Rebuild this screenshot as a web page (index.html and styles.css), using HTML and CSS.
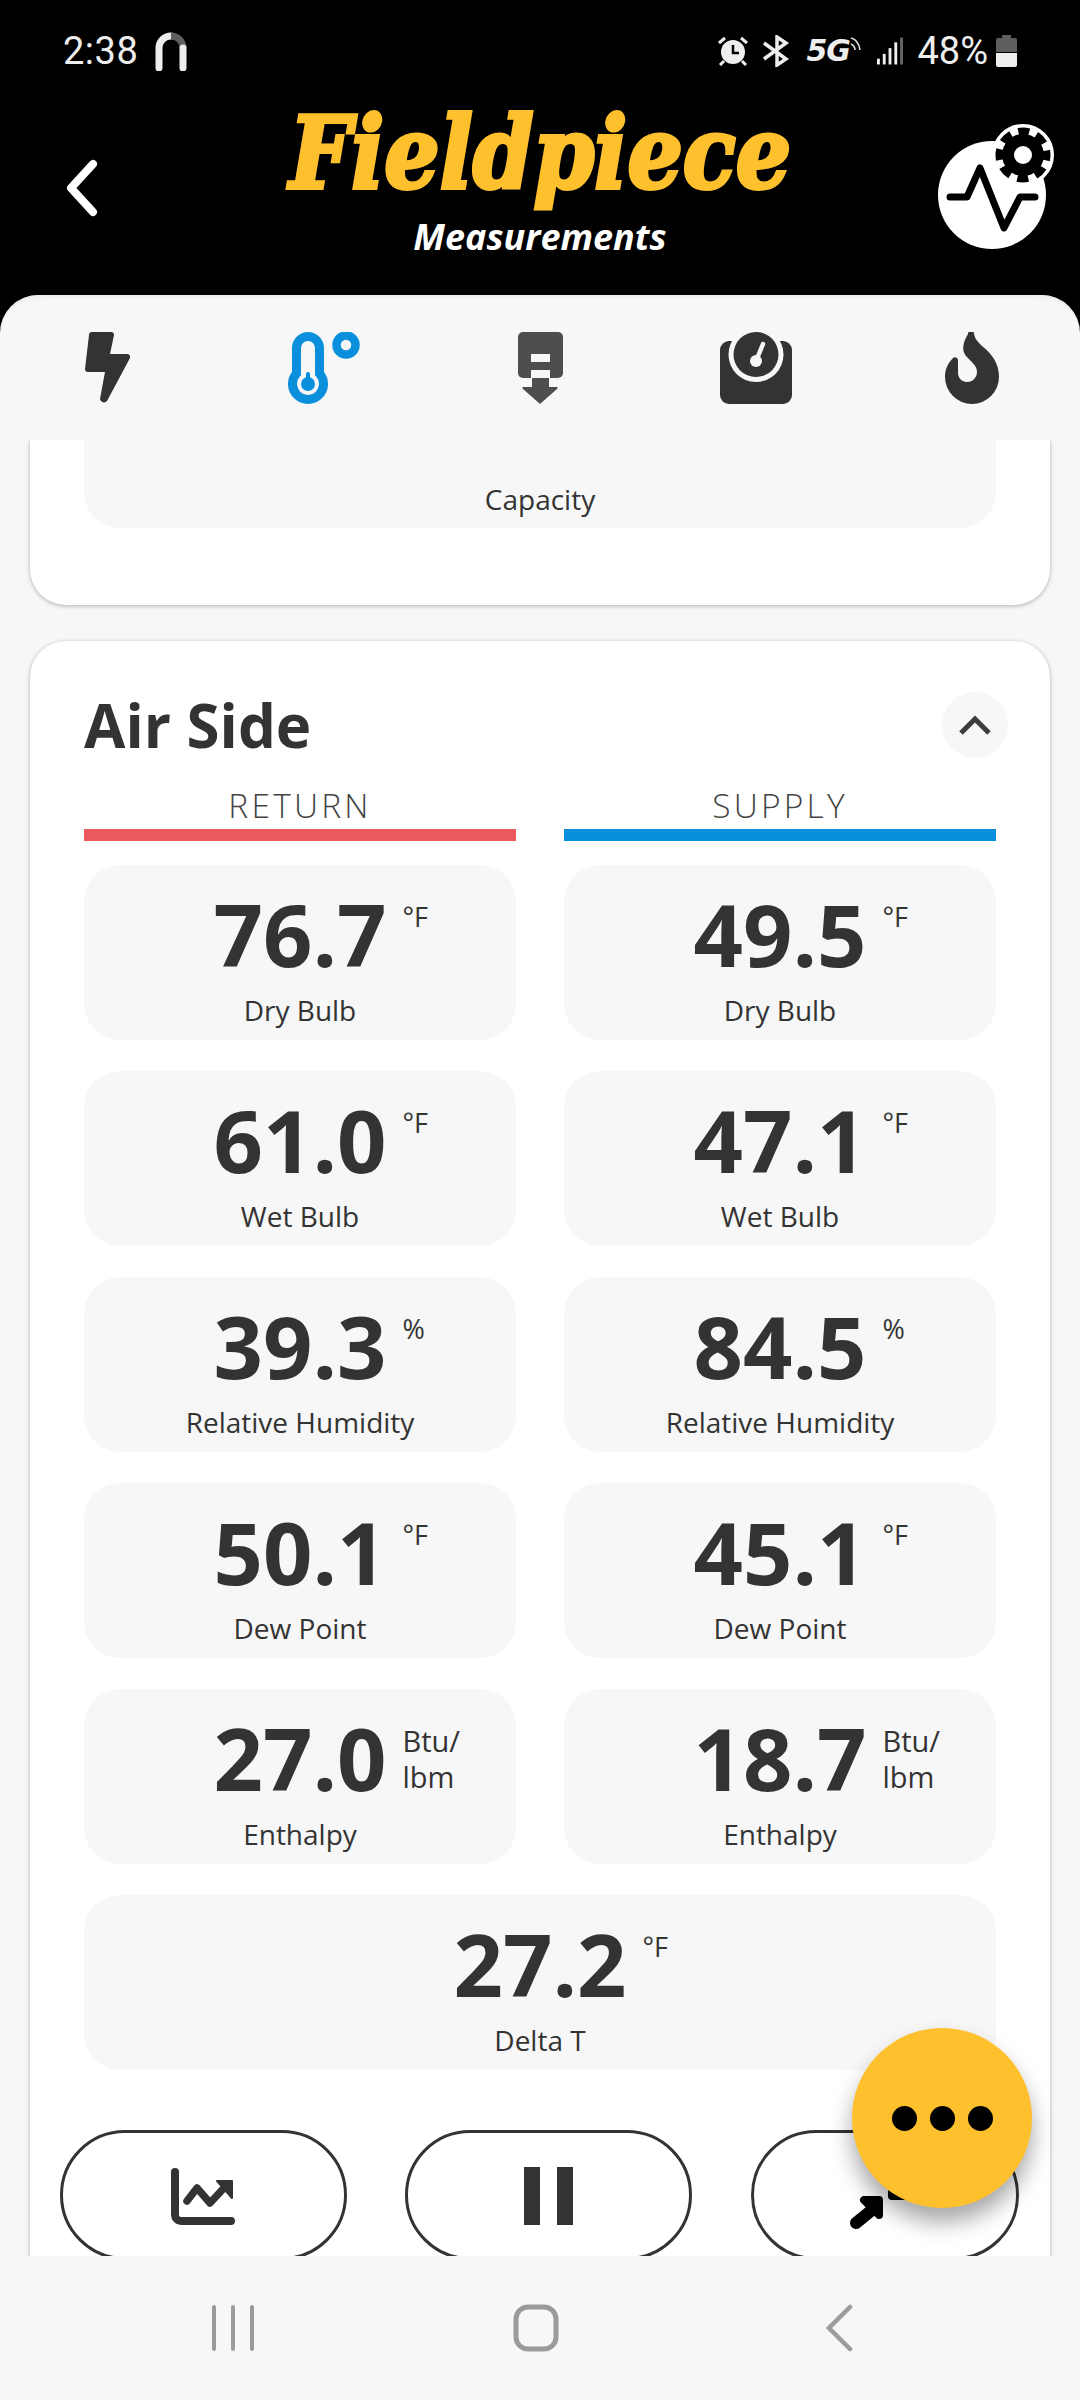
FILE: index.html
```html
<!DOCTYPE html>
<html lang="en">
<head>
<meta charset="utf-8">
<title>Fieldpiece Measurements</title>
<link rel="stylesheet" href="styles.css">
</head>
<body>
<div class="app">
  <header class="top">
    <div class="status">
      <div class="status-left">
        <span class="clock">2:38</span>
        <svg class="s-arch" viewBox="0 0 32 40"><path d="M4 37V17a12 12 0 0 1 12-12" fill="none" stroke="#eee" stroke-width="7" stroke-linecap="round"/><path d="M16 5a12 12 0 0 1 12 12" fill="none" stroke="#5e5e5e" stroke-width="7"/><path d="M28 17V37" fill="none" stroke="#eee" stroke-width="7" stroke-linecap="round"/></svg>
      </div>
      <div class="status-right">
        <svg class="s-alarm" viewBox="0 0 30 30"><circle cx="15" cy="16" r="12" fill="#eee"/><path d="M15 9v8h6" fill="none" stroke="#000" stroke-width="2.500"/><path d="M1 7l6-5M29 7l-6-5M6 25l-4 4M24 25l4 4" stroke="#eee" stroke-width="3" fill="none"/></svg>
        <svg class="s-bt" viewBox="0 0 28 32"><path d="M2 8l22 16-9 6V2l9 6L2 24" fill="none" stroke="#eee" stroke-width="3.500"/></svg>
        <span class="s-5g">5G</span>
        <svg class="s-wave" viewBox="0 0 12 16"><path d="M1 2c4 1 8 5 9 12M1 8c2 1 4 3 4 6" fill="none" stroke="#ddd" stroke-width="1.600"/></svg>
        <svg class="s-signal" viewBox="0 0 27 28"><rect x="0" y="22" width="3" height="6" fill="#eee"/><rect x="6" y="17" width="3" height="11" fill="#eee"/><rect x="12" y="11" width="3" height="17" fill="#eee"/><rect x="18" y="5" width="3" height="23" fill="#eee"/><rect x="24" y="0" width="3" height="28" fill="#666"/></svg>
        <span class="battery-pct">48%</span>
        <svg class="s-batt" viewBox="0 0 21 32"><path d="M6 0h9v3h4a2 2 0 0 1 2 2v12H0V5a2 2 0 0 1 2-2h4z" fill="#5e5e5e"/><path d="M0 18h21v12a2 2 0 0 1-2 2H2a2 2 0 0 1-2-2z" fill="#eee"/></svg>
      </div>
    </div>
    <div class="brand-row">
      <svg class="back" viewBox="0 0 36 60"><path d="M29 6L7 30l22 24" fill="none" stroke="#fff" stroke-width="8" stroke-linecap="round" stroke-linejoin="round"/></svg>
      <div class="brand">
        <div class="logo">Fieldpiece</div>
        <div class="subtitle">Measurements</div>
      </div>
      <svg class="settings" viewBox="0 0 120 130">
        <circle cx="54" cy="75" r="54" fill="#fff"/>
        <path d="M12 77H29L42 48L66 108L82 77H97" fill="none" stroke="#000" stroke-width="7" stroke-linecap="round" stroke-linejoin="round"/>
        <circle cx="85" cy="35" r="27" fill="#fff" stroke="#fff" stroke-width="8"/>
        <circle cx="85" cy="35" r="21" fill="#000"/>
        <circle cx="85" cy="35" r="22" fill="none" stroke="#000" stroke-width="11" stroke-dasharray="10.280 7" stroke-dashoffset="5.140"/>
        <circle cx="85" cy="35" r="9" fill="#fff"/>
      </svg>
    </div>
  </header>

  <div class="panel">
    <nav class="tabs">
      <svg class="tab-ico t-bolt" viewBox="0 0 45 72"><path d="M7 0H26a3 3 0 0 1 3 3L25 22H42a3 3 0 0 1 3 4L22 69a4 4 0 0 1-7-2L20 40H3a3 3 0 0 1-3-3L4 3a3 3 0 0 1 3-3Z" fill="#333"/></svg>
      <svg class="tab-ico t-therm" viewBox="0 0 72 72"><path d="M8.500 41.600V16a11.500 11.500 0 0 1 23 0V41.600a15.500 15.500 0 1 1-23 0Z" fill="none" stroke="#0a8fdc" stroke-width="9"/><circle cx="20" cy="52" r="7" fill="#0a8fdc"/><rect x="18" y="40" width="4" height="10" rx="2" fill="#0a8fdc"/><circle cx="58" cy="13" r="9.500" fill="none" stroke="#0a8fdc" stroke-width="8.500"/></svg>
      <svg class="tab-ico t-probe" viewBox="0 0 45 72"><rect width="45" height="46" rx="5" fill="#4d4e50"/><rect x="13" y="22" width="19" height="8" fill="#f7f7f7"/><rect x="13" y="38" width="19" height="8" fill="#f7f7f7"/><path d="M14 46H31V55H38a1 1 0 0 1 1 2L22 72L5 57a1 1 0 0 1 1-2H14Z" fill="#4d4e50"/></svg>
      <svg class="tab-ico t-scale" viewBox="0 0 72 72"><rect y="9" width="72" height="63" rx="9" fill="#333"/><circle cx="36" cy="22.500" r="27.500" fill="#f7f7f7"/><circle cx="36" cy="22.500" r="22.500" fill="#333"/><circle cx="36" cy="29" r="6" fill="#f7f7f7"/><path d="M36 29L43 12" stroke="#f7f7f7" stroke-width="4.500" stroke-linecap="round"/></svg>
      <svg class="tab-ico t-flame" viewBox="0 0 54 72"><path d="M23 2a3 3 0 0 1 6 0c1 5 4 8 8 12C47 22 54 31 54 45A27 27 0 0 1 0 45C0 37 3 31 8 26a3 3 0 0 1 5 2V41C13 46 17 50 22 50C28 50 32 45 32 40C32 33 26 30 21 24C17 19 17 12 23 2Z" fill="#333"/></svg>
    </nav>

    <main class="scroll">
      <section class="card card-cut">
        <div class="tile tile-cut"><div class="tile-label">Capacity</div></div>
      </section>

      <section class="card card-air">
        <div class="card-head">
          <h2 class="card-title">Air Side</h2>
          <div class="collapse"><svg viewBox="0 0 34 20"><path d="M3 18L17 4l14 14" fill="none" stroke="#3c3c3c" stroke-width="5"/></svg></div>
        </div>
        <div class="grid">
          <div class="col-head"><span class="col-name">RETURN</span><span class="bar bar-red"></span></div>
          <div class="col-head"><span class="col-name">SUPPLY</span><span class="bar bar-blue"></span></div>

          <div class="tile"><div class="reading"><span class="value">76.7</span><span class="unit">°F</span></div><div class="tile-label">Dry Bulb</div></div>
          <div class="tile"><div class="reading"><span class="value">49.5</span><span class="unit">°F</span></div><div class="tile-label">Dry Bulb</div></div>
          <div class="tile"><div class="reading"><span class="value">61.0</span><span class="unit">°F</span></div><div class="tile-label">Wet Bulb</div></div>
          <div class="tile"><div class="reading"><span class="value">47.1</span><span class="unit">°F</span></div><div class="tile-label">Wet Bulb</div></div>
          <div class="tile"><div class="reading"><span class="value">39.3</span><span class="unit">%</span></div><div class="tile-label">Relative Humidity</div></div>
          <div class="tile"><div class="reading"><span class="value">84.5</span><span class="unit">%</span></div><div class="tile-label">Relative Humidity</div></div>
          <div class="tile"><div class="reading"><span class="value">50.1</span><span class="unit">°F</span></div><div class="tile-label">Dew Point</div></div>
          <div class="tile"><div class="reading"><span class="value">45.1</span><span class="unit">°F</span></div><div class="tile-label">Dew Point</div></div>
          <div class="tile"><div class="reading"><span class="value">27.0</span><span class="unit unit-wide">Btu/<br>lbm</span></div><div class="tile-label">Enthalpy</div></div>
          <div class="tile"><div class="reading"><span class="value">18.7</span><span class="unit unit-wide">Btu/<br>lbm</span></div><div class="tile-label">Enthalpy</div></div>
          <div class="tile tile-full"><div class="reading"><span class="value">27.2</span><span class="unit">°F</span></div><div class="tile-label">Delta T</div></div>
        </div>
        <div class="actions">
          <button class="pill pill-a"><svg class="i-chart" viewBox="0 0 66 60"><path d="M4 7V50a6 6 0 0 0 6 6H60" fill="none" stroke="#333" stroke-width="8" stroke-linecap="round"/><path d="M16 36L26 23L39 38L52 24" fill="none" stroke="#333" stroke-width="7.500" stroke-linecap="round" stroke-linejoin="round"/><path d="M46 16H61V33Z" fill="#333" stroke="#333" stroke-width="2" stroke-linejoin="round"/></svg></button>
          <button class="pill pill-b"><svg class="i-pause" viewBox="0 0 49 58"><rect width="16" height="58" fill="#333"/><rect x="33" width="16" height="58" fill="#333"/></svg></button>
          <button class="pill pill-c"><svg class="i-share" viewBox="0 0 72 62"><path d="M6 56L22 43" fill="none" stroke="#000" stroke-width="12" stroke-linecap="round"/><path d="M14 33H29V48Z" fill="#000" stroke="#000" stroke-width="8" stroke-linejoin="round"/><path d="M58 29H42V13Z" fill="#000" stroke="#000" stroke-width="8" stroke-linejoin="round"/></svg></button>
        </div>
      </section>
    </main>
  </div>

  <button class="fab"><span class="dot"></span><span class="dot"></span><span class="dot"></span></button>

  <footer class="sysnav">
    <svg class="n-menu" viewBox="0 0 44 46"><path d="M3 2V44M22 2V44M41 2V44" stroke="#9b9b9b" stroke-width="4" stroke-linecap="round"/></svg>
    <svg class="n-home" viewBox="0 0 46 48"><rect x="3" y="3" width="40" height="42" rx="12" fill="none" stroke="#9b9b9b" stroke-width="5"/></svg>
    <svg class="n-back" viewBox="0 0 28 48"><path d="M25 3L4 24l21 21" fill="none" stroke="#9b9b9b" stroke-width="4.500" stroke-linecap="round"/></svg>
  </footer>
</div>
</body>
</html>
```
FILE: styles.css
```css
* { box-sizing: border-box; }
html, body { margin: 0; padding: 0; background: #000; }
body { font-family: "Open Sans", "Noto Sans", sans-serif; color: #333; }

.app { position: relative; width: 1080px; height: 2400px; display: flex; flex-direction: column; overflow: hidden; background: #000; }

/* header */
.top { height: 295px; flex: none; background: #000; padding: 30px 0 0; }
.status { display: flex; justify-content: space-between; align-items: center; height: 42px; padding: 0 63px 0 63px; }
.status-left, .status-right { display: flex; align-items: center; }
.clock { font-family: Roboto, sans-serif; font-size: 38px; color: #eee; letter-spacing: .5px; }
.s-arch { width: 32px; height: 40px; margin-left: 17px; }
.s-alarm { width: 30px; height: 30px; margin-right: 14px; }
.s-bt { width: 28px; height: 32px; margin-right: 16px; }
.s-5g { font-family: "DejaVu Sans", sans-serif; font-weight: 700; font-style: italic; font-size: 30px; line-height: 36px; color: #eee; width: 44px; letter-spacing: -1px; white-space: nowrap; }
.s-wave { width: 12px; height: 16px; margin: -14px 15px 0 0; }
.s-signal { width: 26px; height: 28px; margin-right: 14px; }
.battery-pct { font-family: Roboto, sans-serif; font-size: 38px; color: #eee; margin-right: 8px; }
.s-batt { width: 21px; height: 32px; }

.brand-row { position: relative; display: flex; justify-content: center; padding-top: 36px; }
.back { position: absolute; left: 64px; top: 86px; width: 36px; height: 60px; }
.brand { width: 520px; display: flex; flex-direction: column; align-items: center; }
.logo { font-family: "DejaVu Serif", "Liberation Serif", serif; font-weight: 700; font-style: italic; font-size: 100px; line-height: 90px; white-space: nowrap; color: #fec02c; -webkit-text-stroke: 4px #fec02c; transform: scaleX(.87); }
.subtitle { margin-top: 17px; font-weight: 700; font-style: italic; font-size: 36px; line-height: 44px; color: #fff; }
.settings { position: absolute; left: 938px; top: 48px; width: 120px; height: 130px; }

/* panel */
.panel { flex: 1; min-height: 0; display: flex; flex-direction: column; background: #f7f7f7; border-radius: 38px 38px 0 0; box-shadow: inset 0 6px 6px -5px #e4e4e4; }
.tabs { flex: none; height: 145px; position: relative; }
.tab-ico { position: absolute; top: 37px; height: 72px; }
.t-bolt { left: 85px; width: 45px; }
.t-therm { left: 288px; width: 72px; }
.t-probe { left: 518px; width: 45px; }
.t-scale { left: 720px; width: 72px; }
.t-flame { left: 945px; width: 54px; }

.scroll { flex: 1; min-height: 0; overflow: hidden; padding: 0 30px; }
.card { background: #fff; border-radius: 36px; padding: 0 54px; box-shadow: 0 1px 4px rgba(0,0,0,.3); margin-bottom: 36px; }
.card-cut { height: 165px; border-radius: 0 0 36px 36px; }
.card-air { padding-bottom: 70px; }
.tile { background: #f7f7f7; border-radius: 36px; height: 175px; display: flex; flex-direction: column; align-items: center; }
.tile-cut { height: 88px; border-radius: 0 0 36px 36px; justify-content: flex-end; padding-bottom: 11px; }

.card-head { display: flex; justify-content: space-between; align-items: flex-start; height: 144px; }
.card-title { margin: 46px 0 0; font-size: 60px; line-height: 76px; font-weight: 700; color: #333; }
.collapse { width: 66px; height: 66px; margin-top: 51px; border-radius: 50%; background: #f7f7f7; margin-right: -12px; display: flex; align-items: center; justify-content: center; }
.collapse svg { width: 34px; height: 20px; }

.grid { display: grid; grid-template-columns: 432px 432px; column-gap: 48px; row-gap: 31px; }
.col-head { display: flex; flex-direction: column; align-items: center; margin-bottom: -7px; }
.col-name { font-weight: 300; font-size: 33.500px; line-height: 40px; letter-spacing: 3.200px; color: #444; }
.bar { align-self: stretch; height: 12px; margin-top: 4px; }
.bar-red { background: #eb5a5f; }
.bar-blue { background: #0a8fdc; }

.reading { position: relative; height: 127px; padding-top: 21px; display: flex; justify-content: center; }
.value { font-weight: 700; font-size: 86.500px; line-height: 96px; color: #333; }
.unit { position: absolute; left: 100%; top: 33px; margin-left: 16px; font-size: 27px; line-height: 38px; color: #333; white-space: nowrap; font-weight: 400; }
.unit-wide { top: 34px; font-size: 29px; line-height: 36px; }
.tile-label { font-size: 28px; line-height: 36px; color: #333; font-weight: 500; }
.tile-full { grid-column: 1 / 3; }

.actions { display: flex; margin: 60px -24px 0 -24px; align-items: flex-start; }
.pill { flex: none; height: 130px; background: #fff; border: 3px solid #333; border-radius: 65px; display: flex; align-items: center; justify-content: center; padding: 0; }
.pill-a, .pill-b { width: 287px; margin-right: 59px; }
.pill-a { margin-right: 58px; }
.pill-c { width: 268px; position: relative; }
.i-chart { width: 66px; height: 60px; }
.i-pause { width: 49px; height: 58px; margin-top: 2px; }
.i-share { position: absolute; left: 96px; top: 34px; width: 72px; height: 62px; }

/* fab */
.fab { position: absolute; left: 852px; top: 2028px; width: 180px; height: 180px; border-radius: 50%; border: 0; background: #fec02c; box-shadow: 0 14px 22px rgba(0,0,0,.35); display: flex; align-items: center; justify-content: center; gap: 13px; padding: 0; }
.dot { width: 25px; height: 25px; border-radius: 50%; background: #000; }

/* system nav */
.sysnav { flex: none; height: 144px; background: #f7f7f7; position: relative; z-index: 1; display: flex; align-items: center; padding: 0 0 0 211px; }
.n-menu { width: 44px; height: 46px; margin-right: 258px; }
.n-home { width: 46px; height: 48px; margin-right: 266px; }
.n-back { width: 28px; height: 48px; }
```
